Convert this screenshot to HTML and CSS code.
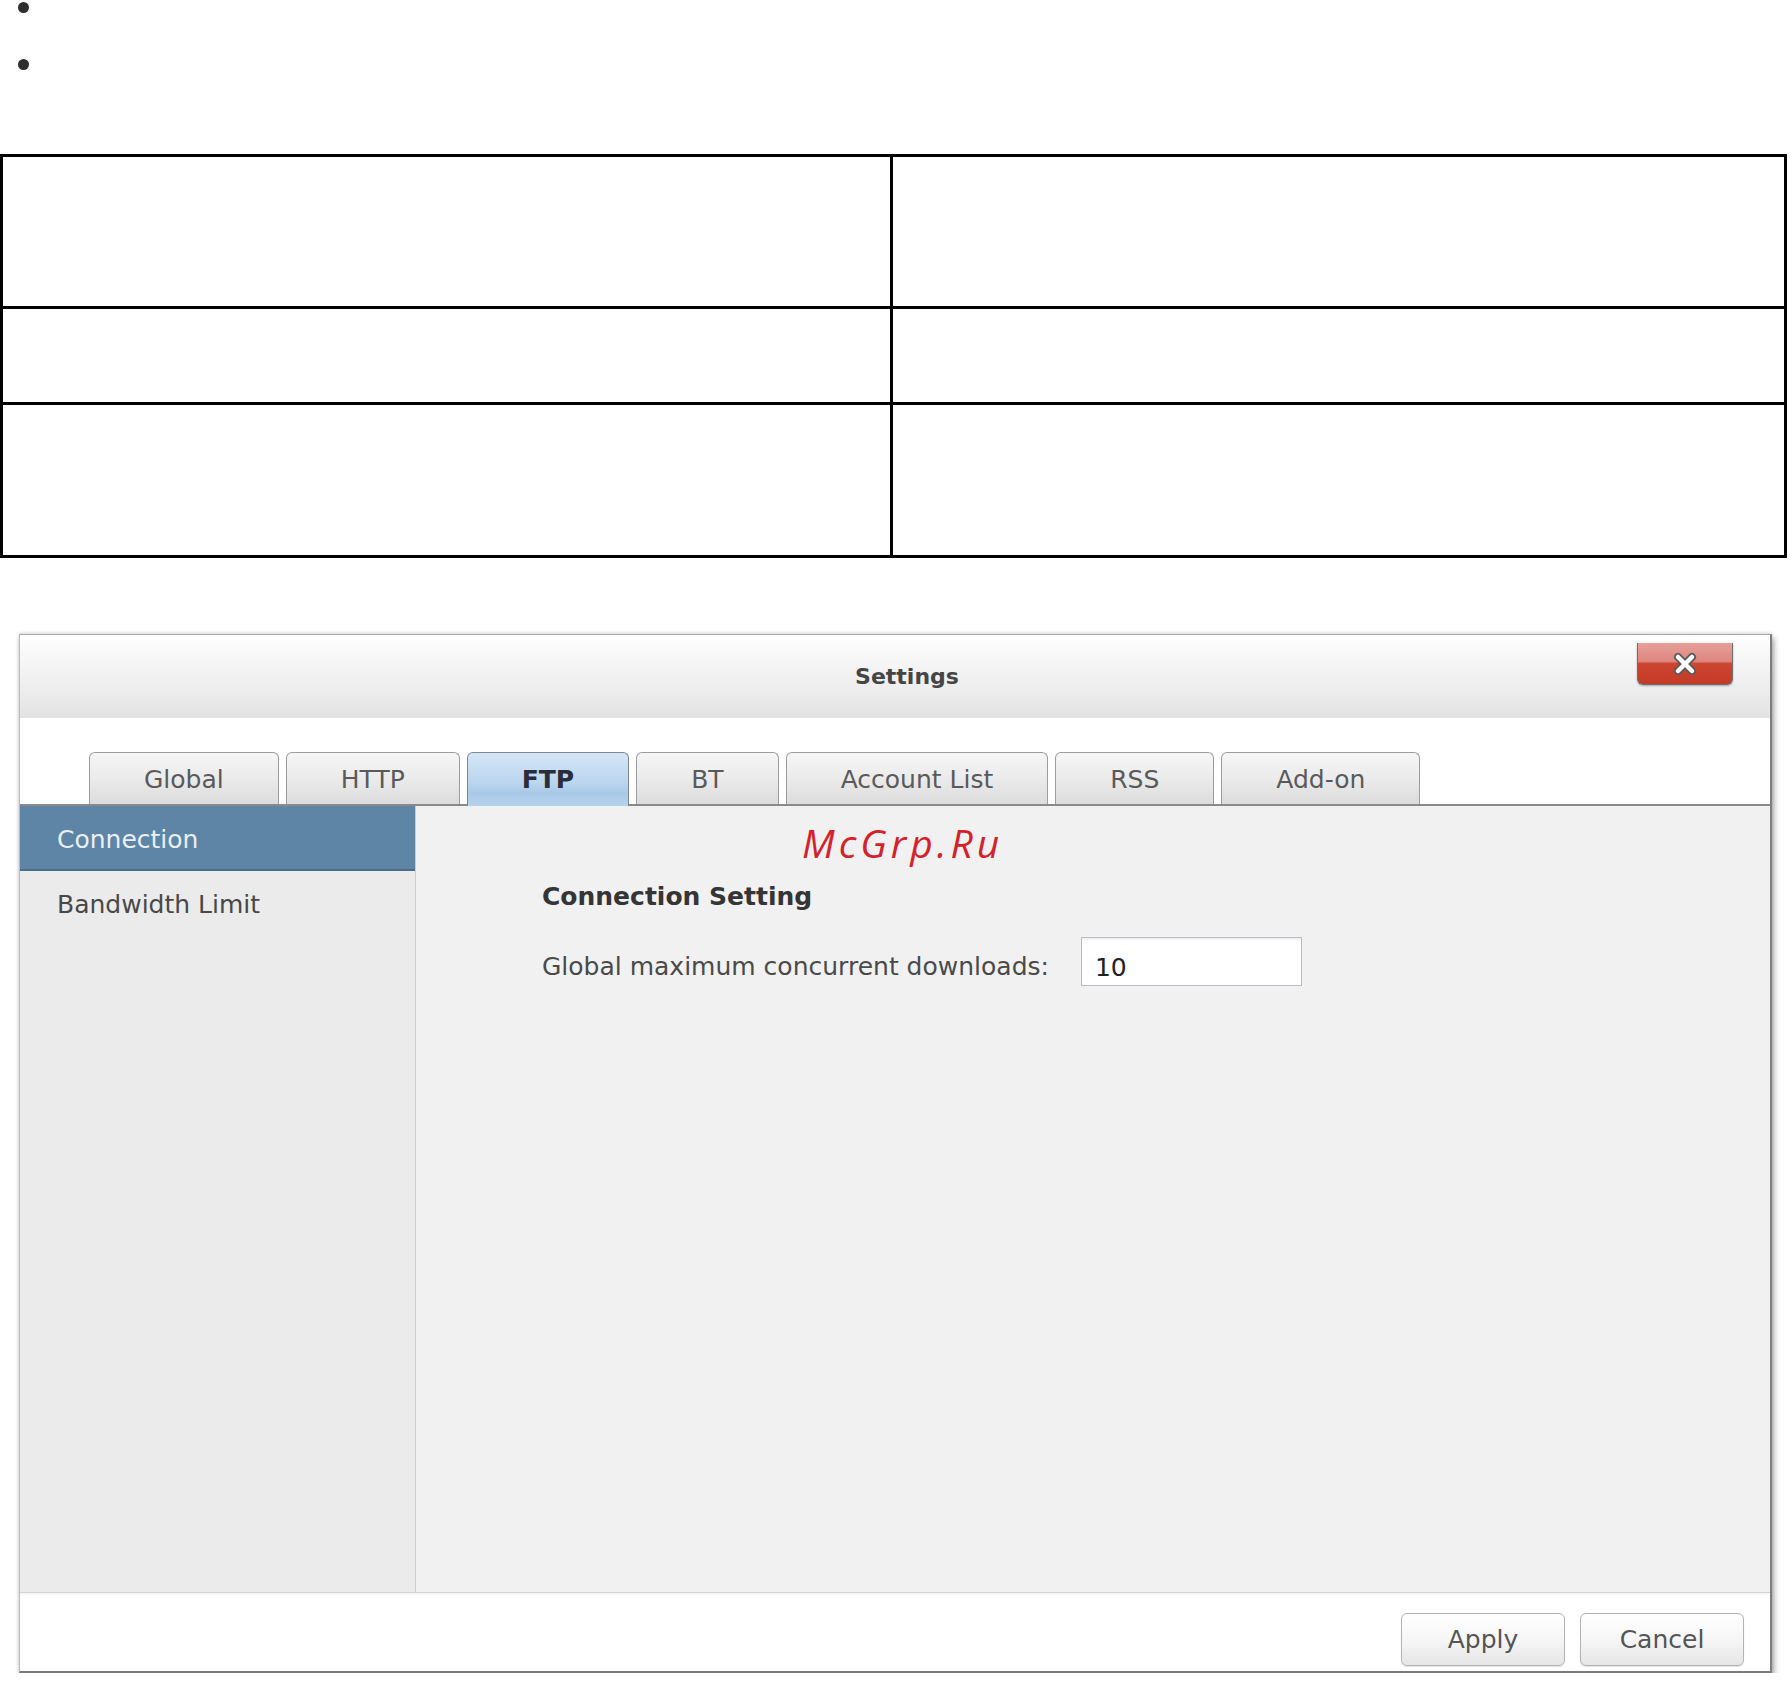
FILE: index.html
```html
<!DOCTYPE html>
<html lang="en">
<head>
    <meta charset="UTF-8">
    <title>Settings - FTP</title>
    <link rel="stylesheet" href="styles.css">
</head>
<body>
    <ul class="dots">
        <li></li>
        <li></li>
    </ul>

    <div class="grid">
        <div class="cell"></div>
        <div class="cell"></div>
        <div class="cell"></div>
        <div class="cell"></div>
        <div class="cell"></div>
        <div class="cell"></div>
    </div>

    <div class="dialog">
        <div class="titlebar">
            <span class="title">Settings</span>
            <button class="close" title="Close">
                <svg width="26" height="24" viewBox="0 0 26 24">
                    <path d="M6 5 L20 19 M20 5 L6 19" stroke="#5a5a5a" stroke-width="8" stroke-linecap="round"/>
                    <path d="M6 5 L20 19 M20 5 L6 19" stroke="#fff" stroke-width="4.5" stroke-linecap="round"/>
                </svg>
            </button>
        </div>

        <div class="tabs">
            <div class="tab">Global</div>
            <div class="tab">HTTP</div>
            <div class="tab active">FTP</div>
            <div class="tab">BT</div>
            <div class="tab">Account List</div>
            <div class="tab">RSS</div>
            <div class="tab">Add-on</div>
        </div>

        <div class="panel">
            <div class="side">
                <div class="item active">Connection</div>
                <div class="item">Bandwidth Limit</div>
            </div>
            <div class="content">
                <div class="mark">McGrp.Ru</div>
                <h3 class="heading">Connection Setting</h3>
                <div class="field">
                    <label for="maxdl">Global maximum concurrent downloads:</label>
                    <input id="maxdl" type="text" value="10">
                </div>
            </div>
        </div>

        <div class="footer">
            <button class="btn">Apply</button>
            <button class="btn">Cancel</button>
        </div>
    </div>
</body>
</html>
```

FILE: styles.css
```css
body{
    margin: 0;
    background: #fff;
    font-family: "DejaVu Sans", "Liberation Sans", sans-serif;
}

/* bullets at the top */
.dots{
    margin: 0;
    padding: 0;
    list-style: none;
}
.dots li{
    height: 55px;
}
.dots li::before{
    content: "";
    display: block;
    width: 11px;
    height: 11px;
    margin: 2px 0 0 18px;
    border-radius: 50%;
    background: #2e2e2e;
}

/* empty bordered table */
.grid{
    display: grid;
    grid-template-columns: 890px 894px;
    grid-template-rows: 152px 96px 153px;
    width: 1787px;
    box-sizing: border-box;
    margin-top: 40px;
    border-top: 3px solid #000;
    border-left: 3px solid #000;
}
.cell{
    border-right: 3px solid #000;
    border-bottom: 3px solid #000;
}

/* settings dialog */
.dialog{
    width: 1753px;
    box-sizing: border-box;
    margin: 76px 0 0 19px;
    border-top: 1px solid #a9a9a9;
    border-left: 1px solid #bdbdbd;
    border-right: 2px solid #7e7e7e;
    border-bottom: 2px solid #7a7a7a;
    box-shadow: 2px 4px 6px rgba(0,0,0,0.35), 0 -1px 3px rgba(0,0,0,0.15);
    background: #fff;
}
.titlebar{
    position: relative;
    height: 83px;
    display: flex;
    align-items: center;
    justify-content: center;
    padding-left: 24px;
    box-sizing: border-box;
    background: linear-gradient(#ffffff 0%, #fbfbfb 12%, #ececec 70%, #e2e2e2 100%);
}
.title{
    font-size: 22px;
    font-weight: bold;
    color: #454545;
}
.close{
    position: absolute;
    top: 8px;
    right: 37px;
    width: 96px;
    height: 42px;
    padding: 0;
    border: 1px solid #6e6e6e;
    border-top: none;
    border-radius: 0 0 6px 6px;
    background: linear-gradient(#e7a19b 0%, #dd857d 45%, #cc4632 50%, #c43a26 100%);
    display: flex;
    align-items: center;
    justify-content: center;
    box-shadow: 0 1px 2px rgba(0,0,0,0.3);
}

.tabs{
    display: flex;
    align-items: flex-end;
    gap: 7px;
    padding: 34px 0 0 69px;
    border-bottom: 2px solid #8a8a8a;
}
.tab{
    height: 52px;
    box-sizing: border-box;
    padding: 12px 54px 0;
    border: 1px solid #9c9c9c;
    border-bottom: none;
    border-radius: 6px 6px 0 0;
    background: linear-gradient(#f6f6f6 0%, #ebebeb 50%, #dcdcdc 100%);
    font-size: 25px;
    line-height: 30px;
    color: #5a5a5a;
}
.tab.active{
    position: relative;
    height: 54px;
    margin-bottom: -2px;
    border-color: #7d8794;
    background: linear-gradient(#d4e6f6 0%, #bcd6ee 55%, #a9c9e8 75%, #b6d3ee 100%);
    font-weight: bold;
    color: #2a2d3a;
}

.panel{
    display: flex;
    height: 786px;
}
.side{
    width: 395px;
    flex: none;
    background: #ebebeb;
    border-right: 1px solid #cecece;
}
.item{
    height: 65px;
    box-sizing: border-box;
    padding: 19px 0 0 37px;
    font-size: 25px;
    line-height: 30px;
    color: #484848;
}
.item.active{
    background: #5e84a6;
    border-bottom: 2px solid #4c6d8c;
    color: #e9eff5;
}
.content{
    position: relative;
    flex: 1;
    padding: 76px 0 0 126px;
    background: #f1f1f1;
}
.mark{
    position: absolute;
    left: 386px;
    top: 13px;
    font-family: "Open Sans", "DejaVu Sans", sans-serif;
    font-style: italic;
    font-size: 39px;
    letter-spacing: 4px;
    line-height: 48px;
    color: #d6202a;
}
.heading{
    margin: 0;
    font-size: 25px;
    line-height: 30px;
    font-weight: bold;
    color: #353535;
}
.field{
    display: flex;
    align-items: flex-start;
    gap: 32px;
    margin-top: 25px;
}
.field label{
    margin-top: 15px;
    font-size: 25px;
    line-height: 30px;
    color: #4a4a4a;
}
.field input{
    width: 221px;
    height: 49px;
    box-sizing: border-box;
    padding: 12px 13px 0;
    border: 1px solid #b9bcc6;
    background: #fff;
    box-shadow: inset 0 2px 2px rgba(0,0,0,0.06);
    font-family: inherit;
    font-size: 25px;
    color: #222;
    outline: none;
}

.footer{
    display: flex;
    justify-content: flex-end;
    gap: 15px;
    height: 79px;
    box-sizing: border-box;
    padding: 20px 26px 0 0;
    border-top: 1px solid #d3d3d3;
    box-shadow: inset 0 2px 2px rgba(0,0,0,0.04);
}
.btn{
    width: 164px;
    height: 53px;
    border: 1px solid #b3b3b3;
    border-radius: 6px;
    background: linear-gradient(#ffffff 0%, #f6f6f6 50%, #e6e6e6 100%);
    font-family: inherit;
    font-size: 25px;
    color: #555;
    box-shadow: 0 1px 1px rgba(0,0,0,0.12);
}
```
